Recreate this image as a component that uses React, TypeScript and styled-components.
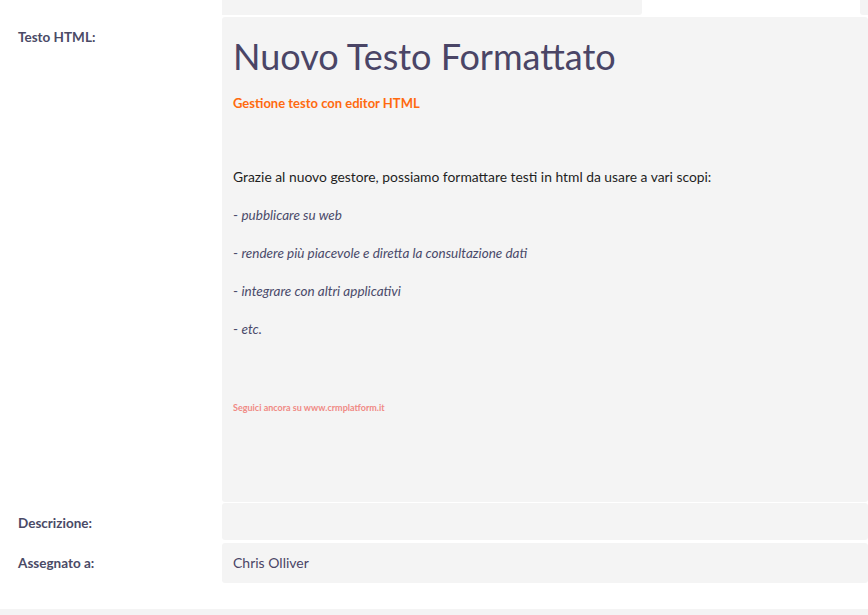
import * as React from 'react'
import styled, { createGlobalStyle } from 'styled-components'

const GlobalStyle = createGlobalStyle`
  html, body {
    margin: 0;
    padding: 0;
    background: #ffffff;
    font-family: Lato, 'Open Sans', sans-serif;
    color: #4a4566;
    overflow: hidden;
  }
`

const fields = [
  { label: 'Descrizione:', value: '', tall: false },
  { label: 'Assegnato a:', value: 'Chris Olliver', tall: true },
]

const items = [
  'pubblicare su web',
  'rendere più piacevole e diretta la consultazione dati',
  'integrare con altri applicativi',
  'etc.',
]

const App: React.FC = () => {
  return (
    <Page>
      <GlobalStyle />
      <Form>
        <TopRow>
          <Blank />
          <TopValue $side="left" />
          <Blank />
          <TopValue $side="right" />
        </TopRow>
        <Row>
          <Label>Testo HTML:</Label>
          <RichPanel>
            <Title>Nuovo Testo Formattato</Title>
            <Subtitle>Gestione testo con editor HTML</Subtitle>
            <Intro>
              Grazie al nuovo gestore, possiamo formattare testi in html da usare a vari scopi:
            </Intro>
            {items.map((item) => (
              <Item key={item}>
                - <em>{item}</em>
              </Item>
            ))}
            <Footnote>Seguici ancora su www.crmplatform.it</Footnote>
          </RichPanel>
        </Row>
        {fields.map((f) => (
          <Row key={f.label}>
            <Label>{f.label}</Label>
            <Value $tall={f.tall}>{f.value}</Value>
          </Row>
        ))}
      </Form>
      <FooterBar />
    </Page>
  )
}

const Page = styled.div`
  width: 868px;
  height: 615px;
  display: flex;
  flex-direction: column;
  justify-content: space-between;
`

const Form = styled.div`
  display: flex;
  flex-direction: column;
  gap: 1.5px;
`

const TopRow = styled.div`
  display: grid;
  grid-template-columns: 222px 420px 218px 1fr;
  grid-template-rows: 14.5px;
  margin-bottom: 0.5px;
`

const Blank = styled.div``

const TopValue = styled.div<{ $side: 'left' | 'right' }>`
  background: #f4f4f4;
  border-radius: ${(p) => (p.$side === 'left' ? '0 0 3px 0' : '0 0 0 3px')};
`

const Row = styled.div`
  display: grid;
  grid-template-columns: 222px 1fr;
`

const Label = styled.div`
  padding: 11px 18px 8px;
  font-size: 13.5px;
  line-height: 19px;
  font-weight: 700;
  color: #4a4a66;
`

const Value = styled.div<{ $tall?: boolean }>`
  background: #f4f4f4;
  border-radius: 3px;
  padding: 0 11px;
  height: ${(p) => (p.$tall ? '40px' : '37px')};
  display: flex;
  align-items: center;
  font-size: 14px;
  color: #4a4566;
`

const RichPanel = styled.div`
  background: #f4f4f4;
  border-radius: 3px;
  padding: 8px 11px 88px;
  display: flex;
  flex-direction: column;
`

const Title = styled.h1`
  margin: 9px 0 0;
  font-size: 36px;
  line-height: 44px;
  font-weight: 400;
  color: #4a4566;
`

const Subtitle = styled.div`
  margin-top: 16px;
  font-size: 13px;
  line-height: 18px;
  font-weight: 700;
  color: #ff6a0f;
`

const Intro = styled.p`
  margin: 55px 0 0;
  font-size: 13.85px;
  line-height: 20px;
  color: #1f1f1f;
`

const Item = styled.p`
  margin: 19px 0 1px;
  font-size: 13.5px;
  line-height: 18px;
  color: #4a4a6a;

  em {
    font-style: italic;
  }
`

const Footnote = styled.div`
  margin-top: 63px;
  font-size: 9px;
  line-height: 12px;
  font-weight: 700;
  color: #f08a84;
`

const FooterBar = styled.div`
  height: 6px;
  background: #f4f4f4;
`

export default App
